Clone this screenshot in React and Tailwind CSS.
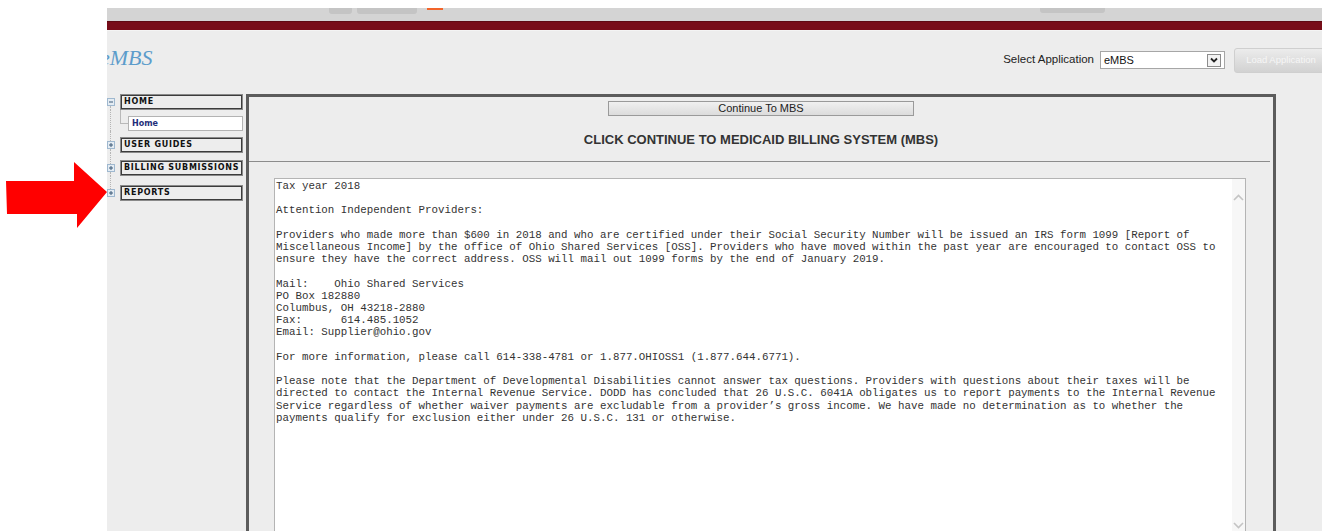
import React from "react";

const NOTICE = [
  "Tax year 2018",
  "",
  "Attention Independent Providers:",
  "",
  "Providers who made more than $600 in 2018 and who are certified under their Social Security Number will be issued an IRS form 1099 [Report of",
  "Miscellaneous Income] by the office of Ohio Shared Services [OSS]. Providers who have moved within the past year are encouraged to contact OSS to",
  "ensure they have the correct address. OSS will mail out 1099 forms by the end of January 2019.",
  "",
  "Mail:    Ohio Shared Services",
  "PO Box 182880",
  "Columbus, OH 43218-2880",
  "Fax:      614.485.1052",
  "Email: Supplier@ohio.gov",
  "",
  "For more information, please call 614-338-4781 or 1.877.OHIOSS1 (1.877.644.6771).",
  "",
  "Please note that the Department of Developmental Disabilities cannot answer tax questions. Providers with questions about their taxes will be",
  "directed to contact the Internal Revenue Service. DODD has concluded that 26 U.S.C. 6041A obligates us to report payments to the Internal Revenue",
  "Service regardless of whether waiver payments are excludable from a provider\u2019s gross income. We have made no determination as to whether the",
  "payments qualify for exclusion either under 26 U.S.C. 131 or otherwise.",
].join("\n");

// Small +/- toggle used by the navigation tree
function ToggleBox({ open }) {
  return (
    <svg width="8" height="8" viewBox="0 0 8 8" className="block shrink-0">
      <rect x="0.5" y="0.5" width="7" height="7" fill="#e4ecf3" stroke="#9fb8cf" />
      <line x1="2" y1="4" x2="6" y2="4" stroke="#3d5a78" strokeWidth="1" />
      {!open && <line x1="4" y1="2" x2="4" y2="6" stroke="#3d5a78" strokeWidth="1" />}
    </svg>
  );
}

function NavRow({ label, open, gap, first, last }) {
  return (
    <div className="flex">
      <div className="flex w-[13px] shrink-0 flex-col items-start">
        <div
          className={`ml-[3px] flex-1 ${first ? "" : "border-l border-dotted border-[#b5b5b5]"}`}
        />
        <ToggleBox open={open} />
        <div
          className={`ml-[3px] h-[4px] ${last ? "" : "border-l border-dotted border-[#b5b5b5]"}`}
        />
      </div>
      <div style={{ paddingTop: gap }}>
        <div className="flex h-[16px] w-[123px] items-center border border-[#8a8a8a] bg-[#ededed] pl-[3px] shadow-[inset_0_0_0_1px_#3c3c3c]">
          <span className="font-['DejaVu_Sans',sans-serif] text-[8px] font-bold tracking-[0.75px] text-[#111]">
            {label}
          </span>
        </div>
      </div>
    </div>
  );
}

function Chevron({ up }) {
  return (
    <svg width="11" height="7" viewBox="0 0 11 7" className="block">
      <polyline
        points={up ? "1,6 5.5,1.5 10,6" : "1,1 5.5,5.5 10,1"}
        fill="none"
        stroke="#c4c4c4"
        strokeWidth="1.6"
      />
    </svg>
  );
}

export default function App() {
  return (
    <div className="relative h-[531px] w-[1322px] overflow-hidden bg-white font-['Liberation_Sans',Arial,sans-serif]">
      <div className="ml-[107px] mt-[8px] flex h-[523px] flex-col overflow-hidden bg-[#ededed]">
        {/* toolbar strip */}
        <div className="flex h-[13px] shrink-0 items-start bg-[#d4d4d4] pl-[222px]">
          <div className="h-[6px] w-[23px] rounded-b-[3px] bg-[#c4c4c4]" />
          <div className="ml-[5px] h-[6px] w-[60px] rounded-b-[3px] bg-[#c4c4c4]" />
          <div className="ml-[10px] h-[2px] w-[16px] bg-[#f2642a]" />
          <div className="ml-[597px] h-[5px] w-[65px] rounded-b-[3px] bg-[#c4c4c4]" />
        </div>
        {/* maroon band */}
        <div className="h-[9px] shrink-0 border-t border-[#5e0a13] bg-[#770d19]" />
        <div className="h-px shrink-0 bg-[#f4f4f4]" />

        {/* header */}
        <div className="flex h-[58px] shrink-0 items-center">
          <div className="mb-[4px] ml-[-7px] font-['Liberation_Serif',serif] text-[22px] italic leading-none text-[#5c9ccb]">
            eMBS
          </div>
          <div className="ml-auto flex items-center">
            <span className="text-[11.5px] text-[#222]">Select Application</span>
            <div className="ml-[6px] flex h-[18px] w-[125px] items-center border border-[#a6a6a6] bg-white pl-[3px] pr-[3px]">
              <span className="flex-1 text-[11px] text-[#111]">eMBS</span>
              <div className="flex h-[13px] w-[14px] items-center justify-center border border-[#8c8c8c] bg-[#f2f2f2]">
                <svg width="8" height="6" viewBox="0 0 8 6">
                  <polyline points="1,1.5 4,4.5 7,1.5" fill="none" stroke="#222" strokeWidth="1.8" />
                </svg>
              </div>
            </div>
            <div className="-mr-[6px] ml-[9px] flex h-[25px] w-[94px] items-center justify-center rounded-[3px] border border-[#cfcfcf] bg-gradient-to-b from-[#ececec] to-[#d2d2d2] text-[9.5px] text-[#f6f6f6]">
              Load Application
            </div>
          </div>
        </div>

        {/* body */}
        <div className="mt-[5px] flex flex-1">
          {/* navigation tree */}
          <div className="w-[139px] shrink-0">
            <NavRow label="HOME" open first gap={0} />
            <div className="flex h-[21px] items-end">
              <div className="ml-[3px] h-full w-[10px] shrink-0 border-l border-dotted border-[#b5b5b5]" />
              <div className="flex h-full shrink-0 flex-col">
                <div className="h-[14px] w-[8px] border-b border-l border-[#b9b9b9]" />
              </div>
              <div className="flex h-[15px] w-[115px] items-center border border-[#b3b3b3] bg-white pl-[3px]">
                <span className="font-['DejaVu_Sans',sans-serif] text-[8px] font-bold text-[#1f2f7a]">
                  Home
                </span>
              </div>
            </div>
            <NavRow label="USER GUIDES" gap={6} />
            <NavRow label="BILLING SUBMISSIONS" gap={7} />
            <NavRow label="REPORTS" gap={9} last />
          </div>

          {/* content panel */}
          <div className="flex w-[1030px] shrink-0 flex-col border-[3px] border-b-0 border-[#5c5c5c] bg-[#ededed]">
            <div className="mt-[4px] flex justify-center">
              <div className="flex h-[15px] w-[306px] items-center justify-center border border-[#9a9a9a] bg-gradient-to-b from-[#f0f0f0] to-[#dcdcdc] text-[11px] leading-none text-[#222]">
                Continue To MBS
              </div>
            </div>
            <div className="mt-[16px] text-center text-[13px] font-bold leading-[15px] text-[#333]">
              CLICK CONTINUE TO MEDICAID BILLING SYSTEM (MBS)
            </div>
            <div className="mr-[3px] mt-[14px] h-px bg-[#8c8c8c]" />
            <div className="ml-[25px] mr-[27px] mt-[16px] flex h-[356px] border border-[#b4b4b4] bg-white">
              <pre className="flex-1 overflow-hidden whitespace-pre pl-[1px] pt-[1px] font-['Liberation_Mono','Courier_New',monospace] text-[10.8px] leading-[12.2px] text-[#333]">
                {NOTICE}
              </pre>
              <div className="flex w-[13px] flex-col items-center justify-between bg-[#f7f7f7] pb-[4px] pt-[15px]">
                <Chevron up />
                <Chevron />
              </div>
            </div>
          </div>
        </div>
      </div>

      {/* red pointer arrow */}
      <svg
        className="absolute left-0 top-[155px]"
        width="112"
        height="80"
        viewBox="0 155 112 80"
      >
        <polygon points="6,181 74,181 74,162 107,192 77,228 77,214 7,214" fill="#ff0000" />
      </svg>
    </div>
  );
}
